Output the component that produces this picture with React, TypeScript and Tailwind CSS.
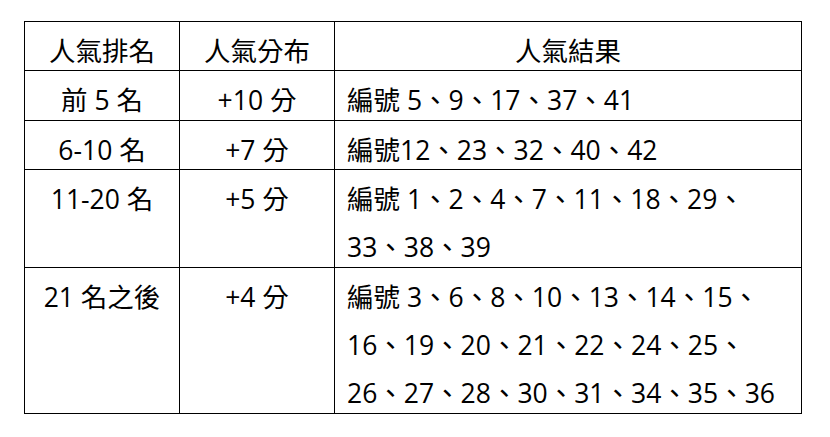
import React from "react";

const font = { fontFamily: '"Open Sans", "Noto Sans CJK TC", sans-serif' };

type Row = { rank: string; score: string; lines: string[]; h: string };

const rows: Row[] = [
  { rank: "前 5 名", score: "+10 分", lines: ["編號 5、9、17、37、41"], h: "h-[50px]" },
  { rank: "6-10 名", score: "+7 分", lines: ["編號12、23、32、40、42"], h: "h-[49px]" },
  {
    rank: "11-20 名",
    score: "+5 分",
    lines: ["編號 1、2、4、7、11、18、29、", "33、38、39"],
    h: "h-[98px]",
  },
  {
    rank: "21 名之後",
    score: "+4 分",
    lines: [
      "編號 3、6、8、10、13、14、15、",
      "16、19、20、21、22、24、25、",
      "26、27、28、30、31、34、35、36",
    ],
    h: "h-[146px]",
  },
];

export default function App() {
  return (
    <div className="w-[830px] h-[437px] bg-white overflow-hidden" style={font}>
      <div className="ml-[24px] mt-[21px] w-[778px] border-t border-l border-black grid grid-cols-[155px_155px_467px] text-[26.5px] leading-[48px] text-black">
        <div className="h-[49px] border-r border-b border-black pt-[5px] text-center">人氣排名</div>
        <div className="h-[49px] border-r border-b border-black pt-[5px] text-center">人氣分布</div>
        <div className="h-[49px] border-r border-b border-black pt-[5px] text-center">人氣結果</div>
        {rows.map((r) => (
          <React.Fragment key={r.rank}>
            <div className={`${r.h} border-r border-b border-black pt-[5px] text-center`}>{r.rank}</div>
            <div className={`${r.h} border-r border-b border-black pt-[5px] text-center`}>{r.score}</div>
            <div className={`${r.h} border-r border-b border-black pt-[5px] pl-[12px] whitespace-nowrap`}>
              {r.lines.map((l) => (
                <div key={l}>{l}</div>
              ))}
            </div>
          </React.Fragment>
        ))}
      </div>
    </div>
  );
}
